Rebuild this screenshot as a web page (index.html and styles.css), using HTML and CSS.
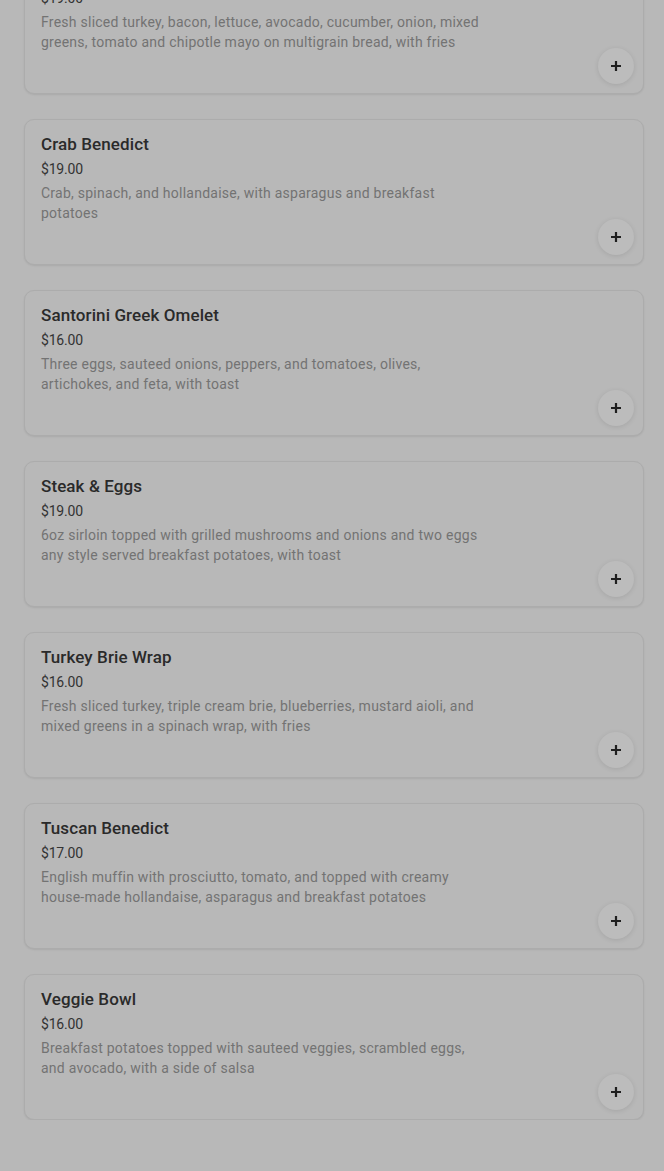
FILE: index.html
```html
<!DOCTYPE html>
<html>
<head>
<meta charset="utf-8">
<link rel="stylesheet" href="styles.css">
</head>
<body>
<div class="menu">
  <div class="card">
    <div class="title">Turkey Club</div>
    <div class="price">$19.00</div>
    <div class="desc">Fresh sliced turkey, bacon, lettuce, avocado, cucumber, onion, mixed greens, tomato and chipotle mayo on multigrain bread, with fries</div>
    <button class="add" aria-label="Add"><svg viewBox="0 0 12 12" width="12" height="12"><path d="M6 1v10M1 6h10" stroke="#1f1f1f" stroke-width="2.2" fill="none"/></svg></button>
  </div>
  <div class="card">
    <div class="title">Crab Benedict</div>
    <div class="price">$19.00</div>
    <div class="desc">Crab, spinach, and hollandaise, with asparagus and breakfast potatoes</div>
    <button class="add" aria-label="Add"><svg viewBox="0 0 12 12" width="12" height="12"><path d="M6 1v10M1 6h10" stroke="#1f1f1f" stroke-width="2.2" fill="none"/></svg></button>
  </div>
  <div class="card">
    <div class="title">Santorini Greek Omelet</div>
    <div class="price">$16.00</div>
    <div class="desc">Three eggs, sauteed onions, peppers, and tomatoes, olives, artichokes, and feta, with toast</div>
    <button class="add" aria-label="Add"><svg viewBox="0 0 12 12" width="12" height="12"><path d="M6 1v10M1 6h10" stroke="#1f1f1f" stroke-width="2.2" fill="none"/></svg></button>
  </div>
  <div class="card">
    <div class="title">Steak &amp; Eggs</div>
    <div class="price">$19.00</div>
    <div class="desc">6oz sirloin topped with grilled mushrooms and onions and two eggs any style served breakfast potatoes, with toast</div>
    <button class="add" aria-label="Add"><svg viewBox="0 0 12 12" width="12" height="12"><path d="M6 1v10M1 6h10" stroke="#1f1f1f" stroke-width="2.2" fill="none"/></svg></button>
  </div>
  <div class="card">
    <div class="title">Turkey Brie Wrap</div>
    <div class="price">$16.00</div>
    <div class="desc">Fresh sliced turkey, triple cream brie, blueberries, mustard aioli, and mixed greens in a spinach wrap, with fries</div>
    <button class="add" aria-label="Add"><svg viewBox="0 0 12 12" width="12" height="12"><path d="M6 1v10M1 6h10" stroke="#1f1f1f" stroke-width="2.2" fill="none"/></svg></button>
  </div>
  <div class="card">
    <div class="title">Tuscan Benedict</div>
    <div class="price">$17.00</div>
    <div class="desc">English muffin with prosciutto, tomato, and topped with creamy house-made hollandaise, asparagus and breakfast potatoes</div>
    <button class="add" aria-label="Add"><svg viewBox="0 0 12 12" width="12" height="12"><path d="M6 1v10M1 6h10" stroke="#1f1f1f" stroke-width="2.2" fill="none"/></svg></button>
  </div>
  <div class="card">
    <div class="title">Veggie Bowl</div>
    <div class="price">$16.00</div>
    <div class="desc">Breakfast potatoes topped with sauteed veggies, scrambled eggs, and avocado, with a side of salsa</div>
    <button class="add" aria-label="Add"><svg viewBox="0 0 12 12" width="12" height="12"><path d="M6 1v10M1 6h10" stroke="#1f1f1f" stroke-width="2.2" fill="none"/></svg></button>
  </div>
</div>
</body>
</html>
```
FILE: styles.css
```css
html, body {
  margin: 0;
  padding: 0;
  background: #b8b8b8;
  font-family: Roboto, "Liberation Sans", sans-serif;
  overflow: hidden;
}
.menu {
  display: flex;
  flex-direction: column;
  gap: 25px;
  padding: 0 20px 0 24px;
  margin-top: -52px;
}
.card {
  display: flex;
  flex-direction: column;
  box-sizing: border-box;
  height: 146px;
  padding: 13px 9px 9px 16px;
  border: 1px solid #acacac;
  border-radius: 10px;
  background: #b8b8b8;
  box-shadow: 0 1px 2px rgba(0, 0, 0, 0.08);
}
.title {
  font-size: 17px;
  font-weight: 500;
  line-height: 22px;
  color: #2a2a2a;
  letter-spacing: 0.1px;
}
.price {
  margin-top: 4px;
  font-size: 14px;
  line-height: 20px;
  color: #333333;
  letter-spacing: -0.2px;
}
.desc {
  margin-top: 4px;
  max-width: 446px;
  font-size: 14px;
  line-height: 20px;
  color: #737373;
  letter-spacing: 0.25px;
}
.add {
  align-self: flex-end;
  margin-top: -4px;
  width: 36px;
  height: 36px;
  padding: 0;
  border: none;
  border-radius: 50%;
  background: #bcbcbc;
  box-shadow: 0 1px 5px rgba(0, 0, 0, 0.1);
  display: flex;
  align-items: center;
  justify-content: center;
}
```
